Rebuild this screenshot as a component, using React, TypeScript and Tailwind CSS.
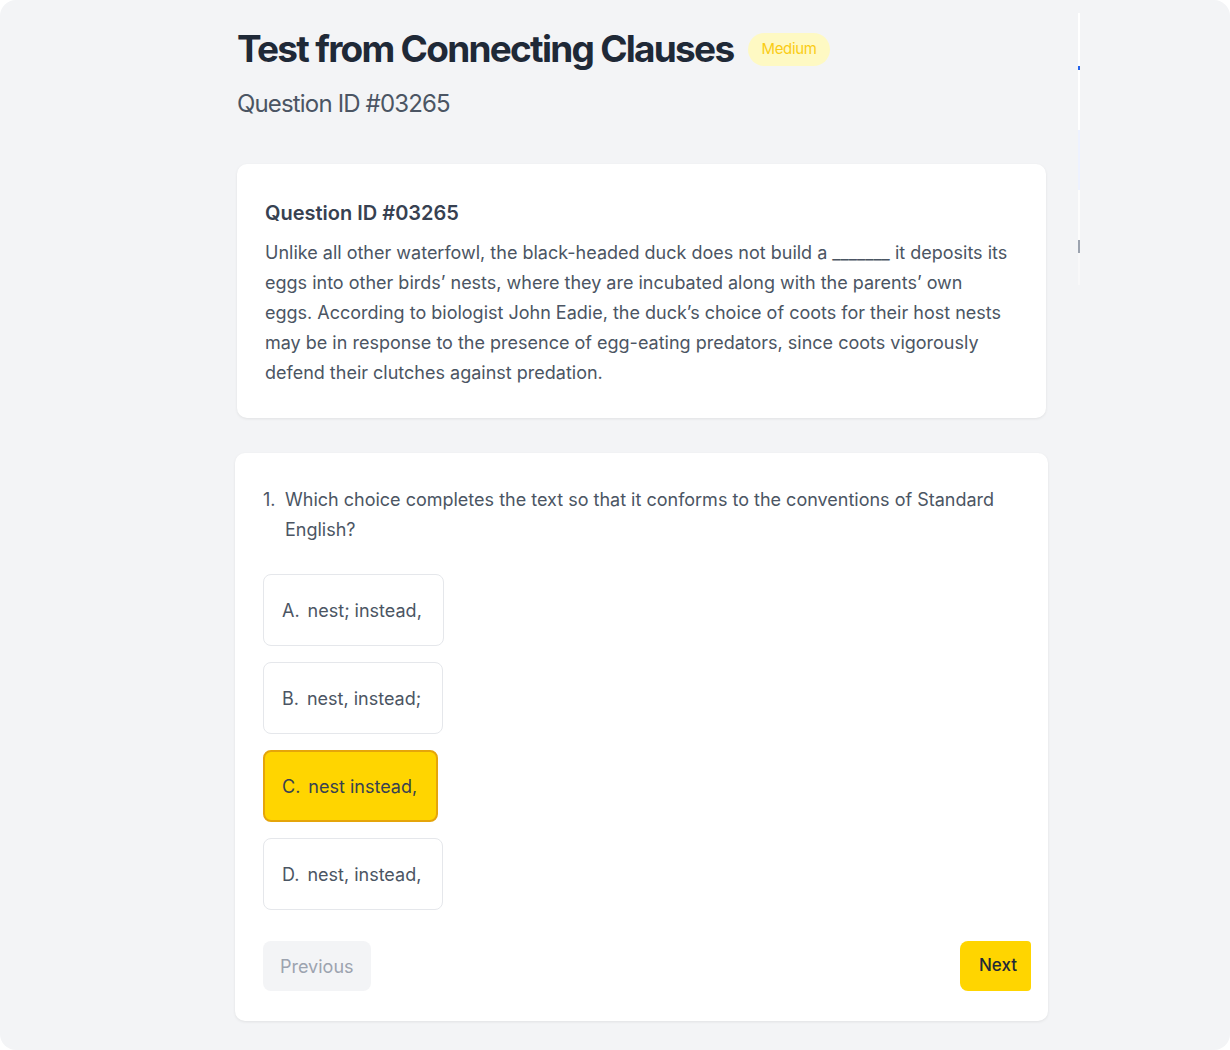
import React from 'react';

const options = [
  { key: 'A', text: 'nest; instead,' },
  { key: 'B', text: 'nest, instead;' },
  { key: 'C', text: 'nest instead,' },
  { key: 'D', text: 'nest, instead,' },
];

const selected = 'C';

export default function App() {
  return (
    <div className="w-[1230px] h-[1050px] bg-white font-['Inter','Noto_Sans',sans-serif]">
      <div className="w-full h-full rounded-2xl bg-[#f3f4f6] flex">
        <main className="ml-[235px] w-[813px] pt-[27px]">
          <div className="flex items-center gap-[15px] pl-[2px]">
            <h1 className="text-[37px] leading-[44px] font-bold text-[#1f2937] tracking-[-0.047em]">
              Test from Connecting Clauses
            </h1>
            <span className="h-[33px] px-[13px] flex items-center rounded-full bg-[#fef9c3] text-[#facc15] text-[15px] tracking-[-0.02em]">
              Medium
            </span>
          </div>
          <p className="mt-[17px] pl-[2px] text-[24px] leading-[32px] text-[#4b5563] tracking-[-0.035em]">
            Question ID #03265
          </p>

          <section className="mt-[44px] ml-[2px] w-[809px] bg-white rounded-[10px] shadow-[0_1px_3px_rgba(0,0,0,0.08)] pl-[28px] pr-[34px] pt-[35px] pb-[30px]">
            <h2 className="text-[20px] leading-[28px] font-semibold text-[#374151]">
              Question ID #03265
            </h2>
            <p className="mt-[11px] text-[18px] leading-[30px] text-[#4b5563]">
              Unlike all other waterfowl, the black-headed duck does not build a _______ it deposits its eggs into
              other birds’ nests, where they are incubated along with the parents’ own eggs. According to biologist
              John Eadie, the duck’s choice of coots for their host nests may be in response to the presence of
              egg-eating predators, since coots vigorously defend their clutches against predation.
            </p>
          </section>

          <section className="mt-[35px] w-[813px] bg-white rounded-[10px] shadow-[0_1px_3px_rgba(0,0,0,0.08)] pl-[28px] pr-[17px] pt-[32px] pb-[30px]">
            <div className="flex text-[18px] leading-[30px] text-[#4b5563] pr-[20px]">
              <span className="w-[22px] shrink-0">1.</span>
              <p>Which choice completes the text so that it conforms to the conventions of Standard English?</p>
            </div>

            <div className="mt-[29px] flex flex-col items-start gap-4">
              {options.map((o) => {
                const active = o.key === selected;
                return (
                  <button
                    key={o.key}
                    className={
                      active
                        ? 'h-[72px] pl-[17px] pr-[19px] flex items-center rounded-lg border-2 border-[#e5a50a] bg-[#ffd500] text-[18px] text-[#374151]'
                        : 'h-[72px] pl-[18px] pr-[21px] flex items-center rounded-lg border border-[#e5e7eb] bg-white text-[18px] text-[#4b5563]'
                    }
                  >
                    <span className="mr-[8px]">{o.key}.</span>
                    <span>{o.text}</span>
                  </button>
                );
              })}
            </div>

            <div className="mt-[31px] flex justify-between overflow-hidden">
              <button className="h-[50px] px-[17px] rounded-lg bg-[#f3f4f6] text-[18px] text-[#9ca3af]">
                Previous
              </button>
              <button className="h-[50px] pl-[19px] pr-[14px] rounded-l-lg rounded-r-sm bg-[#ffd500] text-[17px] font-medium text-[#1f2937]">
                Next
              </button>
            </div>
          </section>
        </main>

        <div className="ml-[30px] mt-[13px] w-[2px] h-[272px] flex flex-col">
          <div className="h-[53px] bg-white" />
          <div className="h-[4px] bg-[#2563eb]" />
          <div className="h-[60px] bg-white" />
          <div className="h-[60px] bg-[#eef2ff]" />
          <div className="h-[50px] bg-white/70" />
          <div className="h-[13px] bg-[#9ca3af]" />
          <div className="h-[32px] bg-white/40" />
        </div>
      </div>
    </div>
  );
}
